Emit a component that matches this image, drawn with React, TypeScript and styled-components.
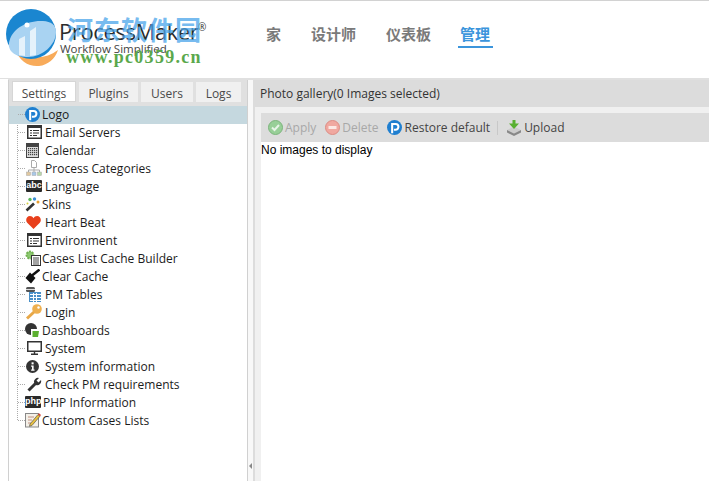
import React from "react";
import styled, { createGlobalStyle } from "styled-components";

const Global = createGlobalStyle`
  html, body { margin: 0; padding: 0; background: #fff; overflow: hidden; }
  body { font-family: "Open Sans", "Noto Sans", sans-serif; font-size: 12px; color: #222; }
`;
const Page = styled.div`
  width: 709px; height: 481px; display: flex; flex-direction: column; overflow: hidden;
`;
const Header = styled.header`
  height: 77px; flex: none; border-top: 1px solid #d2d2d2; display: flex; background: #fff;
`;
const LogoBox = styled.div`
  width: 266px; flex: none; position: relative;
`;
const LogoMark = styled.svg`
  position: absolute; left: 5px; top: 8px;
`;
const LogoName = styled.span`
  position: absolute; left: 59px; top: 17px; font: 22px/26px "Open Sans", sans-serif; color: #2b2b2b; letter-spacing: -0.4px;
`;
const LogoReg = styled.span`
  position: absolute; left: 198px; top: 21px; font: 10px/10px "Open Sans", sans-serif; color: #333;
`;
const LogoTag = styled.span`
  position: absolute; left: 60px; top: 41px; font: 11.5px/14px "Open Sans", sans-serif; color: #444;
`;
const WaterCn = styled.span`
  position: absolute; left: 67px; top: 12px; font: bold 26px/32px "Noto Sans CJK SC", sans-serif; color: #4aa5ea; opacity: .75; letter-spacing: 1px;
`;
const WaterUrl = styled.span`
  position: absolute; left: 66px; top: 46px; font: bold 18px/20px "Liberation Serif", serif; color: #5aa84c; letter-spacing: 1.3px;
`;
const Nav = styled.nav`
  display: flex; gap: 30px; align-items: flex-start; padding-top: 23px;
`;
const NavItem = styled.a<{ $active?: boolean }>`
  font: bold 15px/20px "Noto Sans CJK SC", sans-serif; color: ${p => (p.$active ? "#3b95dc" : "#7a7a7a")};
  padding: ${p => (p.$active ? "0 3px 2px 2px" : "0 0 2px")}; margin-left: ${p => (p.$active ? "-3px" : "0")};
  border-bottom: 2px solid ${p => (p.$active ? "#3b95dc" : "transparent")};
`;
const Body = styled.div`
  flex: 1; display: flex; background: #e0e0e0; padding-top: 2px; min-height: 0;
`;
const Gutter = styled.div`
  width: 8px; flex: none; background: #fff; margin-top: -1px;
`;
const Left = styled.aside`
  width: 240px; box-sizing: border-box; flex: none; display: flex; flex-direction: column;
  border-left: 1px solid #d0d0d0; border-right: 1px solid #d0d0d0; background: #e0e0e0;
`;
const Tabs = styled.div`
  height: 26px; box-sizing: border-box; flex: none; padding: 0 0 4px 3px; display: flex; gap: 3px; align-items: flex-end; background: #e0e0e0;
`;
const Tab = styled.div<{ $active?: boolean; $w: number }>`
  width: ${p => p.$w}px; height: ${p => (p.$active ? 21 : 20)}px; box-sizing: border-box; text-align: center;
  background: ${p => (p.$active ? "#fff" : "#f0f0f0")}; color: #4a4a4a; font-size: 12px;
  line-height: 23px;
  border: ${p => (p.$active ? "1px solid #d6d6d6" : "0")};
`;
const Tree = styled.div`
  flex: 1; background: #fff; position: relative;
`;
const TreeRail = styled.div`
  position: absolute; left: 8px; top: 8px; height: 306px; border-left: 1px dotted #aaa;
`;
const Row = styled.div<{ $sel?: boolean }>`
  height: 18px; box-sizing: border-box; padding: 0 0 2px 16px; display: flex; align-items: center; position: relative;
  background: ${p => (p.$sel ? "#c5d8df" : "transparent")};
  color: #1c1c1c; font-size: 12px; white-space: nowrap; letter-spacing: .02px;
`;
const Tick = styled.i`
  width: 7px; height: 0; border-top: 1px dotted #aaa; position: absolute; left: 9px; top: 8px;
`;
const IconSlot = styled.span<{ $w: number; $x?: number }>`
  width: ${p => p.$w}px; box-sizing: border-box; padding-left: ${p => p.$x ?? 0}px; flex: none; display: flex; align-items: center;
`;
const Splitter = styled.div`
  width: 5px; flex: none; background: #f8f8f8; position: relative;
`;
const SplitArrow = styled.i`
  position: absolute; left: 1px; top: 383px; border: 3px solid transparent; border-right: 3px solid #888; border-left: 0;
`;
const Right = styled.main`
  flex: 1; min-width: 0; display: flex; flex-direction: column;
`;
const PanelTitle = styled.div`
  height: 27px; flex: none; background: #dcdcdc; color: #333; padding-left: 7px; line-height: 28px; font-size: 12px; white-space: nowrap;
`;
const PanelBody = styled.div`
  flex: 1; background: #f0f0f0; padding: 6px 0 0 6px; border-left: 2px solid #dcdcdc; display: flex; flex-direction: column;
`;
const Toolbar = styled.div`
  height: 29px; flex: none; background: #dcdcdc; display: flex; align-items: center; padding-left: 7px;
`;
const ToolBtn = styled.span<{ $off?: boolean; $gap?: number; $inner?: number }>`
  display: flex; align-items: center; gap: ${p => p.$inner ?? 2}px; margin-right: ${p => p.$gap ?? 8}px; color: ${p => (p.$off ? "#a8a8a8" : "#444")}; font-size: 12px;
`;
const ToolSep = styled.i`
  width: 1px; height: 14px; background: #c8c8c8; margin-right: 8px;
`;
const Content = styled.div`
  flex: 1; background: #fff; font: 12px/16px "Liberation Sans", Arial, sans-serif; color: #000;
`;

const s = { display: "block" } as const;
const Doc = () => (
  <svg width="15" height="14" viewBox="0 0 15 14" style={s}>
    <rect x=".75" y=".75" width="13.5" height="12.5" fill="#fff" stroke="#333" strokeWidth="1.5" />
    <rect x="1" y="1" width="13" height="2" fill="#333" />
    <path d="M3 5.5h2M6 5.5h6M3 8h2M6 8h6M3 10.5h2M6 10.5h4" stroke="#333" />
  </svg>
);
const PIcon = ({ size = 15 }: { size?: number }) => (
  <svg width={size} height={size} viewBox="0 0 16 16" style={s}>
    <circle cx="8" cy="8" r="8" fill="#1f7fd0" />
    <path d="M5.5 14V4.2h3.6a3.1 3.1 0 0 1 0 6.2H7.4" fill="none" stroke="#fff" strokeWidth="2.2" />
  </svg>
);
const Calendar = () => (
  <svg width="13" height="15" viewBox="0 0 13 15" style={s}>
    <rect width="13" height="15" fill="#444" />
    <rect x="1" y="4" width="11" height="10" fill="#ddd" />
    {[5, 7, 9, 11].map(y => [2, 4, 6, 8, 10].map(x => <rect key={`${x}-${y}`} x={x} y={y} width="1.2" height="1.2" fill="#444" />))}
  </svg>
);
const Categories = () => (
  <svg width="16" height="16" viewBox="0 0 16 16" style={s}>
    <path d="M5.5.5h3l2 2v5h-5z" fill="#fff" stroke="#aaa" />
    <path d="M8 7v3M2.5 12v-2h11v2M8 10v2" fill="none" stroke="#aaa" />
    <rect x=".5" y="12" width="4" height="3.5" fill="#e0c8a0" stroke="#aaa" strokeWidth=".5" />
    <rect x="6" y="12" width="4" height="3.5" fill="#a8c8e8" stroke="#aaa" strokeWidth=".5" />
    <rect x="11.5" y="12" width="4" height="3.5" fill="#b8d8a8" stroke="#aaa" strokeWidth=".5" />
  </svg>
);
const BlackBadge = styled.span<{ $w: number }>`
  width: ${p => p.$w}px; height: 12px; background: #2a2a2a; color: #fff; font: bold 9px/10px "Liberation Sans", sans-serif; text-align: center; display: block; overflow: hidden; border-radius: 1px;
`;
const Skins = () => (
  <svg width="15" height="15" viewBox="0 0 15 15" style={s}>
    <path d="M1.5 13.5 9 6.500" stroke="#333" strokeWidth="2.600" />
    <circle cx="5" cy="2.500" r="1.700" fill="#5bb85b" /><circle cx="9.500" cy="2" r="1.700" fill="#3b8fd8" />
    <circle cx="13" cy="5" r="1.500" fill="#e8a030" /><circle cx="2.500" cy="6.500" r="1" fill="#d8d040" />
  </svg>
);
const Heart = () => (
  <svg width="15" height="13" viewBox="0 0 15 13" style={s}>
    <path d="M7.500 13 1.200 6.800C-1 4.400.6 0 3.900 0c1.600 0 2.800.8 3.600 2.200C8.300.8 9.500 0 11.100 0c3.300 0 4.900 4.400 2.700 6.800z" fill="#e8401c" />
  </svg>
);
const Gear = () => (
  <svg width="16" height="16" viewBox="0 0 16 16" style={s}>
    <circle cx="5" cy="5" r="3.500" fill="#8cc870" stroke="#70b050" strokeWidth="2" strokeDasharray="2 1" />
    <rect x="6.500" y="5.500" width="9" height="10" fill="#fff" stroke="#333" />
    <path d="M8 8h6M8 10h6M8 12h6M8 14h6" stroke="#333" strokeWidth=".9" />
  </svg>
);
const Broom = () => (
  <svg width="15" height="15" viewBox="0 0 15 15" style={s}>
    <path d="M14.500.5 7 6.500" stroke="#111" strokeWidth="2.500" />
    <path d="M5 3.500 10.500 9 6 14.500 .5 9z" fill="#111" />
  </svg>
);
const Tables = () => (
  <svg width="15" height="15" viewBox="0 0 15 15" style={s}>
    <rect x="0" y="0" width="9" height="5" rx="1.500" fill="#555" />
    <rect x="0" y="2" width="9" height="1" fill="#ddd" />
    <rect x="3" y="5" width="12" height="10" fill="#4a90c8" />
    {[7.5, 10.5].map(x => <path key={x} d={`M${x} 6v9`} stroke="#fff" />)}
    {[7.5, 10.5, 13.5].map(y => <path key={y} d={`M4 ${y}h11`} stroke="#fff" />)}
  </svg>
);
const Key = () => (
  <svg width="17" height="16" viewBox="0 0 17 16" style={s}>
    <circle cx="12" cy="5" r="4.800" fill="#eeb050" />
    <circle cx="13.500" cy="3.500" r="1.200" fill="#fff" />
    <path d="M9 8 2 14.500" stroke="#e8a848" strokeWidth="3" />
  </svg>
);
const Dash = () => (
  <svg width="15" height="15" viewBox="0 0 15 15" style={s}>
    <circle cx="6" cy="6" r="6" fill="#333" />
    <path d="M6 6h9l-1.500 9H6z" fill="#fff" />
    <path d="M7.500 8H14l-1 6H7.500z" fill="#5cb030" />
  </svg>
);
const Monitor = () => (
  <svg width="15" height="14" viewBox="0 0 15 14" style={s}>
    <rect x=".75" y=".75" width="13.500" height="9.500" fill="#fff" stroke="#333" strokeWidth="1.500" />
    <path d="M7.500 11v1.500M4 13.300h7" stroke="#333" strokeWidth="1.400" />
  </svg>
);
const Info = () => (
  <svg width="13" height="13" viewBox="0 0 14 14" style={s}>
    <circle cx="7" cy="7" r="7" fill="#333" />
    <rect x="6" y="2.500" width="2.200" height="2.200" fill="#fff" />
    <path d="M5.500 6H8.200v4.200h1V11.500H5.500v-1.300h1V7.300h-1z" fill="#fff" />
  </svg>
);
const Wrench = () => (
  <svg width="15" height="15" viewBox="0 0 15 15" style={s}>
    <path d="M1.500 13.500 8.500 6.500" stroke="#333" strokeWidth="3" />
    <path d="M7 5.500a4 4 0 0 1 5-4.500l-2.500 2.500 2 2L14 3a4 4 0 0 1-5 5z" fill="#333" />
  </svg>
);
const Note = () => (
  <svg width="16" height="16" viewBox="0 0 16 16" style={s}>
    <rect x=".5" y="1.500" width="13" height="13.500" fill="#f4f0e8" stroke="#888" />
    <path d="M3 5h6M3 8h4M3 11h3" stroke="#c09080" />
    <path d="M5 12 13 2.500l2 1.700L7 13.500l-2.500.8z" fill="#e8c040" stroke="#444" strokeWidth=".6" />
    <path d="M13 2.500 14 1.300l2 1.700-1 1.200z" fill="#d84030" />
  </svg>
);
const Apply = () => (
  <svg width="15" height="15" viewBox="0 0 15 15" style={s}>
    <circle cx="7.500" cy="7.500" r="7" fill="#98cf98" stroke="#7cb47c" />
    <path d="M4 7.500l2.500 2.500L11 5" fill="none" stroke="#e8f4e8" strokeWidth="2" />
  </svg>
);
const Minus = () => (
  <svg width="15" height="15" viewBox="0 0 15 15" style={s}>
    <circle cx="7.500" cy="7.500" r="7" fill="#f0a8a0" stroke="#dc8c84" />
    <rect x="3.500" y="6" width="8" height="3" fill="#fbe8e4" />
  </svg>
);
const Upload = () => (
  <svg width="16" height="16" viewBox="0 0 16 16" style={s}>
    <path d="M1 10 8 6.500l7 3.500-7 3.500z" fill="#ccc" />
    <path d="M1 10v2.500L8 16l7-3.500V10l-7 3.500z" fill="#888" />
    <path d="M6.500 0h3v3.500H13L8 9 3 3.500h3.500z" fill="#58b030" />
  </svg>
);

type Item = { label: string; icon: React.ReactNode; w: number; x?: number };
const items: Item[] = [
  { label: "Email Servers", icon: <Doc />, w: 20, x: 2 },
  { label: "Calendar", icon: <Calendar />, w: 20, x: 1 },
  { label: "Process Categories", icon: <Categories />, w: 20, x: 1 },
  { label: "Language", icon: <BlackBadge $w={16}>abc</BlackBadge>, w: 20, x: 1 },
  { label: "Skins", icon: <Skins />, w: 17 },
  { label: "Heart Beat", icon: <Heart />, w: 20, x: 1 },
  { label: "Environment", icon: <Doc />, w: 20, x: 2 },
  { label: "Cases List Cache Builder", icon: <Gear />, w: 17 },
  { label: "Clear Cache", icon: <Broom />, w: 17 },
  { label: "PM Tables", icon: <Tables />, w: 20, x: 1 },
  { label: "Login", icon: <Key />, w: 20 },
  { label: "Dashboards", icon: <Dash />, w: 17 },
  { label: "System", icon: <Monitor />, w: 20, x: 2 },
  { label: "System information", icon: <Info />, w: 20, x: 1 },
  { label: "Check PM requirements", icon: <Wrench />, w: 20, x: 2 },
  { label: "PHP Information", icon: <BlackBadge $w={16}>php</BlackBadge>, w: 18 },
  { label: "Custom Cases Lists", icon: <Note />, w: 17 },
];

export default function App() {
  return (
    <Page>
      <Global />
      <Header>
        <LogoBox>
          <LogoMark width="56" height="60" viewBox="0 0 56 60">
            <path d="M10 40C14 52 24 58 34 57c9-1 16-7 19-16-8 6-16 8-24 7-7-.5-14-3-19-8z" fill="#f8ab5a" />
            <circle cx="26" cy="25" r="25" fill="#1a86d0" />
            <path d="M4 34C6 20 22 11 38 12c8 .5 13 4 13 11 0 13-14 25-28 25C12 48 3 44 4 34z" fill="#a9d3f2" />
            <path d="M14 46V30l6-3v20zM25 47V22l6-4v28z" fill="#fff" opacity=".7" />
            <circle cx="22" cy="16" r="2.500" fill="#fff" />
          </LogoMark>
          <LogoName>ProcessMaker</LogoName>
          <LogoReg>®</LogoReg>
          <LogoTag>Workflow Simplified</LogoTag>
          <WaterCn>河东软件园</WaterCn>
          <WaterUrl>www.pc0359.cn</WaterUrl>
        </LogoBox>
        <Nav>
          <NavItem>家</NavItem>
          <NavItem>设计师</NavItem>
          <NavItem>仪表板</NavItem>
          <NavItem $active>管理</NavItem>
        </Nav>
      </Header>
      <Body>
        <Gutter />
        <Left>
          <Tabs>
            <Tab $active $w={64}>Settings</Tab>
            <Tab $w={59}>Plugins</Tab>
            <Tab $w={52}>Users</Tab>
            <Tab $w={45}>Logs</Tab>
          </Tabs>
          <Tree>
            <TreeRail />
            <Row $sel><Tick /><IconSlot $w={17}><PIcon /></IconSlot>Logo</Row>
            {items.map(it => (
              <Row key={it.label}><Tick /><IconSlot $w={it.w} $x={it.x}>{it.icon}</IconSlot>{it.label}</Row>
            ))}
          </Tree>
        </Left>
        <Splitter><SplitArrow /></Splitter>
        <Right>
          <PanelTitle>Photo gallery(0 Images selected)</PanelTitle>
          <PanelBody>
            <Toolbar>
              <ToolBtn $off $gap={9}><Apply />Apply</ToolBtn>
              <ToolBtn $off><Minus />Delete</ToolBtn>
              <ToolBtn $gap={7} $inner={3}><PIcon />Restore default</ToolBtn>
              <ToolSep />
              <ToolBtn><Upload />Upload</ToolBtn>
            </Toolbar>
            <Content>No images to display</Content>
          </PanelBody>
        </Right>
      </Body>
    </Page>
  );
}
